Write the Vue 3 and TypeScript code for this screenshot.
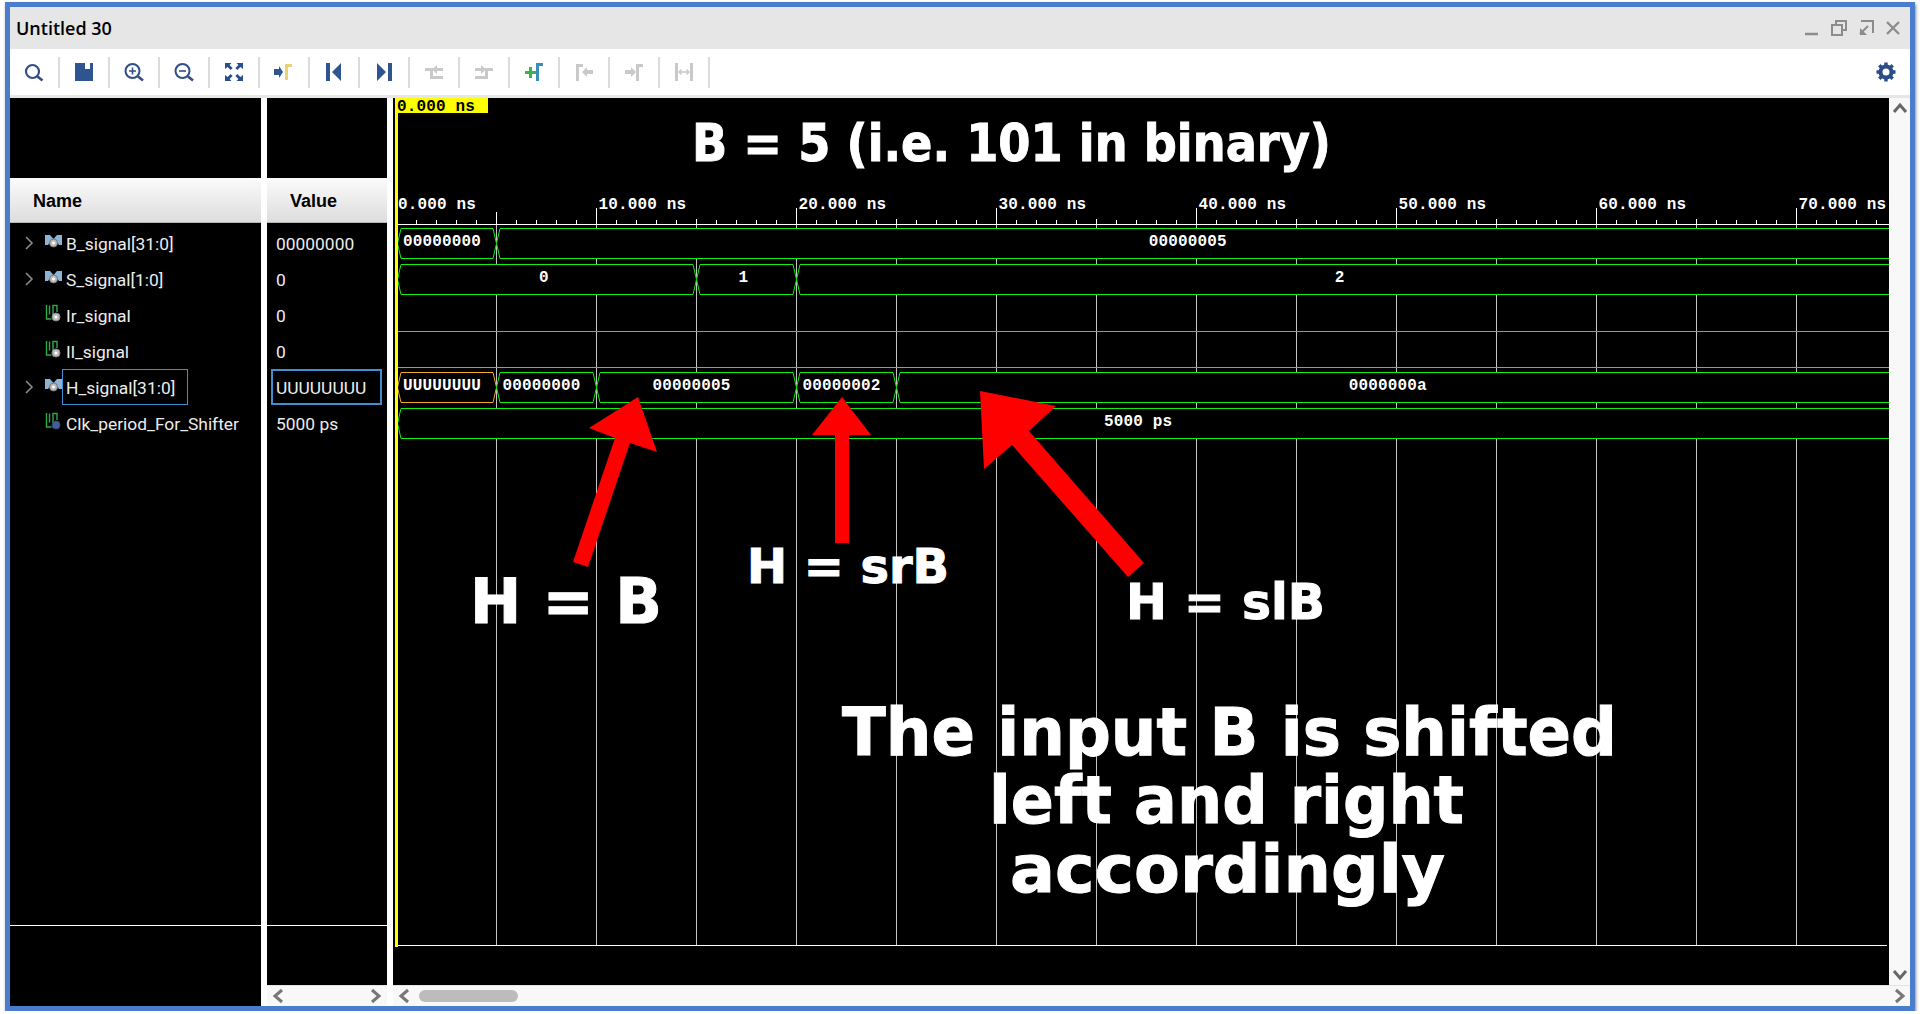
<script setup lang="ts">
// waveform viewer: the svg canvas uses page coordinates through its viewBox
interface Seg { from: number; to: number; label: string; color?: string }
interface Bus { top: number; base: number; segs: Seg[] }

const NS0 = 396.5
const PX_PER_NS = 20
const RIGHT = 1900 // past the edge of the canvas, gets clipped
const xOf = (ns: number) => NS0 + ns * PX_PER_NS

const signals = [
  { name: 'B_signal[31:0]', value: '00000000', bus: true },
  { name: 'S_signal[1:0]', value: '0', bus: true },
  { name: 'Ir_signal', value: '0', bus: false },
  { name: 'Il_signal', value: '0', bus: false },
  { name: 'H_signal[31:0]', value: 'UUUUUUUU', bus: true, selected: true },
  { name: 'Clk_period_For_Shifter', value: '5000 ps', bus: false, clock: true },
]

const buses: Bus[] = [
  { top: 228.5, base: 246, segs: [
    { from: 397.5, to: xOf(5), label: '00000000' },
    { from: xOf(5), to: RIGHT, label: '00000005' },
  ] },
  { top: 264.5, base: 282, segs: [
    { from: 397.5, to: xOf(15), label: '0' },
    { from: xOf(15), to: xOf(20), label: '1' },
    { from: xOf(20), to: RIGHT, label: '2' },
  ] },
  { top: 372.5, base: 390, segs: [
    { from: 397.5, to: xOf(5), label: 'UUUUUUUU', color: '#f5a623' },
    { from: xOf(5), to: xOf(10), label: '00000000' },
    { from: xOf(10), to: xOf(20), label: '00000005' },
    { from: xOf(20), to: xOf(25), label: '00000002' },
    { from: xOf(25), to: RIGHT, label: '0000000a' },
  ] },
  { top: 408.5, base: 426, segs: [
    { from: 397.5, to: RIGHT, label: '5000 ps' },
  ] },
]

const flatLines = [331.5, 367.5]

const grid = Array.from({ length: 15 }, (_, i) => xOf((i + 1) * 5))
const labels = Array.from({ length: 8 }, (_, i) => i * 10)
const minorTicks = Array.from({ length: 75 }, (_, i) => xOf(i + 1))

function hexPoints(s: Seg, top: number) {
  const bot = top + 30
  const mid = top + 15
  return `${s.from},${mid} ${s.from + 3.5},${top} ${s.to - 3.5},${top} ${s.to},${mid} ${s.to - 3.5},${bot} ${s.from + 3.5},${bot}`
}

function labelX(s: Seg) {
  const to = Math.min(s.to, 1889)
  return (s.from + to) / 2 - (s.label.length > 1 ? 5 : 3)
}

const notes = [
  { text: 'B = 5 (i.e. 101 in binary)', x: 692, y: 161, len: 639, size: 52 },
  { text: 'H = B', x: 470, y: 623, len: 192, size: 63 },
  { text: 'H = srB', x: 747, y: 583, len: 202, size: 48 },
  { text: 'H = slB', x: 1126, y: 619, len: 199, size: 49 },
  { text: 'The input B is shifted', x: 842, y: 755, len: 775, size: 66 },
  { text: 'left and right', x: 989, y: 823, len: 475, size: 66 },
  { text: 'accordingly', x: 1010, y: 892, len: 435, size: 66 },
]

const arrows = [
  '638,397 589,428 615,438 573,562 588,567 630,443 657,452',
  '842,397 812,435 835,435 835,543 849,543 849,435 871,435',
  '980,391 1056,406 1029,431 1144,563 1128,577 1012,445 984,469',
]
</script>

<template>
  <div class="window">
    <header class="titlebar">
      <span class="title">Untitled 30</span>
      <div class="win-btns">
        <svg width="18" height="18" viewBox="0 0 18 18"><path d="M2 15h13" stroke="#8c8c8c" stroke-width="2.5" /></svg>
        <svg width="18" height="18" viewBox="0 0 18 18" fill="none" stroke="#8c8c8c" stroke-width="2"><path d="M6 5V2h10v9h-3" /><rect x="2" y="6" width="10" height="10" /></svg>
        <svg width="18" height="18" viewBox="0 0 18 18" fill="none" stroke="#8c8c8c" stroke-width="2"><path d="M4 2h12v12" /><path d="M3 15l8-8" /><path d="M3 9v7h7" fill="#8c8c8c" stroke="none" /></svg>
        <svg width="18" height="18" viewBox="0 0 18 18" fill="none" stroke="#8c8c8c" stroke-width="2.4"><path d="M3 3l12 12M15 3L3 15" /></svg>
      </div>
    </header>

    <nav class="toolbar">
      <div class="tool">
        <svg viewBox="0 0 24 24" fill="none" stroke="#2f4f86"><circle cx="10.5" cy="11.5" r="6.5" stroke-width="2.2" /><path d="M15.5 16.5l5 4" stroke-width="2.6" /></svg>
      </div>
      <div class="tool">
        <svg viewBox="0 0 24 24"><path d="M3 3h18v18H3z" fill="#2f5590" /><path d="M13 3h5v6h-5z" fill="#fff" /></svg>
      </div>
      <div class="tool">
        <svg viewBox="0 0 24 24" fill="none" stroke="#2f4f86"><circle cx="10.5" cy="11" r="7" stroke-width="2" /><path d="M10.5 7.5v7M7 11h7" stroke-width="1.6" /><path d="M16 16.5l5 4" stroke-width="2.6" /></svg>
      </div>
      <div class="tool">
        <svg viewBox="0 0 24 24" fill="none" stroke="#2f4f86"><circle cx="10.5" cy="11" r="7" stroke-width="2" /><path d="M7 11h7" stroke-width="1.6" /><path d="M16 16.5l5 4" stroke-width="2.6" /></svg>
      </div>
      <div class="tool">
        <svg viewBox="0 0 24 24" fill="#2a4f8c"><path d="M3 3h6.5L7.6 5l3 3-2 2-3-3L3 9zM21 3v6l-2.600-2-3 3-2-2 3-3L14.500 3zM3 21v-6l2.600 2 3-3 2 2-3 3L9.500 21zM21 21h-6.500l1.900-2-3-3 2-2 3 3 2.600-2z" /></svg>
      </div>
      <div class="tool">
        <svg viewBox="0 0 24 24"><path d="M2 9h5V6l4 6-4 6v-3H2z" fill="#2f5590" /><path d="M13 4h7v3h-4v13h-3z" fill="#e9d26f" /></svg>
      </div>
      <div class="tool">
        <svg viewBox="0 0 24 24" fill="#2f5590"><path d="M4 3h4v18H4zM19 3v18L10 12z" /></svg>
      </div>
      <div class="tool">
        <svg viewBox="0 0 24 24" fill="#2f5590"><path d="M5 3v18l9-9zM16 3h4v18h-4z" /></svg>
      </div>
      <div class="tool">
        <svg viewBox="0 0 24 24" fill="#c9c9c9"><path d="M3 11h5v8h13v-3H11V8H3z" /><path d="M21 8h-6V5l-5 4.500 5 4.500v-3h6z" /></svg>
      </div>
      <div class="tool">
        <svg viewBox="0 0 24 24" fill="#c9c9c9"><path d="M3 8h6v-3l5 4.500-5 4.500v-3H3z" /><path d="M3 16h10V8h8v3h-5v8H3z" /></svg>
      </div>
      <div class="tool">
        <svg viewBox="0 0 24 24"><path d="M3 11h4V7h3v4h4v3h-4v4H7v-4H3z" fill="#3bb34a" /><path d="M14 3h7v3h-4v15h-3z" fill="#3a8db5" /></svg>
      </div>
      <div class="tool">
        <svg viewBox="0 0 24 24" fill="#c9c9c9"><path d="M4 4h7v3H7v14H4z" /><path d="M21 10h-6V7l-5 5 5 5v-3h6z" /></svg>
      </div>
      <div class="tool">
        <svg viewBox="0 0 24 24" fill="#c9c9c9"><path d="M3 10h6V7l5 5-5 5v-3H3z" /><path d="M14 4h7v3h-4v14h-3z" /></svg>
      </div>
      <div class="tool">
        <svg viewBox="0 0 24 24" fill="none" stroke="#c9c9c9"><path d="M4.500 3v18M19.500 3v18" stroke-width="3" /><path d="M7 12h10M9.500 9.500L7 12l2.500 2.500M14.500 9.500L17 12l-2.500 2.500" stroke-width="1.400" /></svg>
      </div>
      <div class="gear">
        <svg width="22" height="22" viewBox="0 0 22 22" fill="none" stroke="#2a4c88">
          <circle cx="11" cy="11" r="5.500" stroke-width="4" />
          <g stroke-width="3.400">
            <path d="M11 1.500v3M11 17.500v3M1.500 11h3M17.500 11h3M4.300 4.300l2.100 2.100M15.600 15.600l2.100 2.100M17.700 4.300l-2.100 2.100M6.400 15.600l-2.100 2.100" />
          </g>
        </svg>
      </div>
    </nav>

    <main class="panes">
      <section class="names">
        <div class="top-gap"></div>
        <div class="col-head name-head">Name</div>
        <div class="rows">
          <div v-for="s in signals" :key="s.name" class="row">
            <svg v-if="s.bus" class="chev" width="10" height="16" viewBox="0 0 10 16" fill="none" stroke="#8a8a8a" stroke-width="1.600"><path d="M2 2l6 6-6 6" /></svg>
            <span v-else class="chev-space"></span>
            <svg v-if="s.bus" class="sig-icon" width="17" height="16" viewBox="0 0 17 16">
              <path d="M0 1h5l3.500 4L12 1h5v10h-3l-2-3H5l-2 3H0z" fill="#8db4d4" />
              <circle cx="8.500" cy="9" r="4" fill="#bbb" stroke="#777" />
              <circle cx="8.500" cy="9" r="1.500" fill="#fff" />
            </svg>
            <svg v-else class="sig-icon scalar" width="17" height="18" viewBox="0 0 17 18" fill="none">
              <path d="M1.500 1v14h5" stroke="#2fa84a" stroke-width="1.400" />
              <path d="M4.500 1.500v9M8 11V1.500h4V8" stroke="#2fa84a" stroke-width="1.400" />
              <circle cx="11" cy="13" r="4" :fill="s.clock ? '#3f5f95' : '#bbb'" :stroke="s.clock ? '#2f4a78' : '#888'" />
              <circle v-if="!s.clock" cx="11" cy="13" r="1.500" fill="#fff" />
            </svg>
            <span class="sig-name" :class="{ selected: s.selected }">{{ s.name }}</span>
          </div>
        </div>
        <div class="names-foot"></div>
      </section>

      <section class="values">
        <div class="top-gap"></div>
        <div class="col-head value-head">Value</div>
        <div class="rows">
          <div v-for="s in signals" :key="s.name" class="row">
            <span class="sig-value" :class="{ selected: s.selected }">{{ s.value }}</span>
          </div>
        </div>
        <div class="values-foot"></div>
        <div class="hscroll">
          <svg width="12" height="16" viewBox="0 0 12 16" fill="none" stroke="#777" stroke-width="3"><path d="M10 2L3 8l7 6" /></svg>
          <svg width="12" height="16" viewBox="0 0 12 16" fill="none" stroke="#777" stroke-width="3"><path d="M2 2l7 6-7 6" /></svg>
        </div>
      </section>

      <section class="wave-col">
        <div class="wave-main">
          <svg class="canvas" width="1496" height="887" viewBox="393 98 1496 887">
            <!-- grid -->
            <line v-for="x in grid" :key="x" class="gridline" :x1="x" :x2="x" y1="224" y2="945" />
            <line class="ruler" x1="398" x2="1889" y1="224.500" y2="224.500" />
            <line class="ruler" x1="398" x2="1887" y1="945.500" y2="945.500" />

            <!-- ruler -->
            <line v-for="x in minorTicks" :key="x" class="ruler" :x1="x" :x2="x" y1="220" y2="224" />
            <line class="ruler" x1="496.500" x2="496.500" y1="212" y2="224" />
            <line v-for="x in grid" :key="'t' + x" class="ruler" :x1="x" :x2="x" y1="219" y2="224" />
            <template v-for="n in labels" :key="n">
              <line v-if="n" class="ruler" :x1="xOf(n)" :x2="xOf(n)" y1="208" y2="224" />
              <text class="mono" :x="xOf(n) + (n ? 2 : 1.500)" y="209">{{ n }}.000 ns</text>
            </template>

            <!-- signals -->
            <line v-for="y in flatLines" :key="y" class="flat" x1="398" x2="1889" :y1="y" :y2="y" />
            <template v-for="b in buses" :key="b.top">
              <template v-for="s in b.segs" :key="s.from">
                <polygon class="bus" :points="hexPoints(s, b.top)" :style="s.color ? { stroke: s.color } : undefined" />
                <text class="mono" text-anchor="middle" :x="labelX(s)" :y="b.base">{{ s.label }}</text>
              </template>
            </template>

            <!-- cursor -->
            <rect x="395" y="98" width="3" height="849" fill="#ffff00" />
            <rect x="396" y="98" width="92" height="15" fill="#ffff00" />
            <text class="mono cursor-label" x="397" y="111">0.000 ns</text>

            <!-- hand drawn notes on top of the capture -->
            <polygon v-for="a in arrows" :key="a" :points="a" fill="#ff0000" />
            <text
              v-for="n in notes"
              :key="n.text"
              class="note"
              :x="n.x"
              :y="n.y"
              :font-size="n.size"
              :textLength="n.len"
              lengthAdjust="spacingAndGlyphs"
            >{{ n.text }}</text>
          </svg>
          <div class="vscroll">
            <svg width="16" height="12" viewBox="0 0 16 12" fill="none" stroke="#666" stroke-width="3"><path d="M2 10l6-7 6 7" /></svg>
            <svg width="16" height="12" viewBox="0 0 16 12" fill="none" stroke="#666" stroke-width="3"><path d="M2 2l6 7 6-7" /></svg>
          </div>
        </div>
        <div class="hscroll wave-scroll">
          <svg width="12" height="16" viewBox="0 0 12 16" fill="none" stroke="#777" stroke-width="3"><path d="M10 2L3 8l7 6" /></svg>
          <div class="thumb"></div>
          <svg class="to-right" width="12" height="16" viewBox="0 0 12 16" fill="none" stroke="#777" stroke-width="3"><path d="M2 2l7 6-7 6" /></svg>
        </div>
      </section>
    </main>
  </div>
</template>

<style scoped>
.window {
  box-sizing: border-box;
  width: 1910px;
  height: 1009px;
  margin: 2px 0 0 5px;
  border: 5px solid #4a7dcc;
  display: flex;
  flex-direction: column;
  background: #fff;
  box-shadow: 1px 2px 3px #888;
}

.titlebar {
  height: 42px;
  flex: none;
  background: #e6e6e6;
  display: flex;
  align-items: center;
  justify-content: space-between;
  padding: 0 8px 0 6px;
}
.title {
  font: 600 18px "Open Sans", sans-serif;
  color: #000;
}
.win-btns { display: flex; gap: 9px; }
.win-btns svg { display: block; }

.toolbar {
  height: 46px;
  flex: none;
  box-sizing: content-box;
  border-bottom: 3px solid #e6e6e6;
  display: flex;
  align-items: center;
}
.tool {
  box-sizing: border-box;
  width: 50px;
  height: 31px;
  border-right: 2px solid #dcdcdc;
  display: flex;
  align-items: center;
  justify-content: center;
}
.tool svg { width: 24px; height: 24px; display: block; }
.gear { margin-left: auto; padding-right: 13px; height: 22px; }

.panes {
  flex: 1;
  min-height: 0;
  display: flex;
}
.names, .values {
  background: #000;
  display: flex;
  flex-direction: column;
  margin-right: 6px;
  flex: none;
}
.names { width: 251px; }
.values { width: 120px; }
.top-gap { height: 80px; flex: none; }
.col-head {
  box-sizing: border-box;
  height: 45px;
  flex: none;
  padding-top: 3px;
  background: linear-gradient(#fbfbfb, #dddddd);
  border-bottom: 1px solid #b5b5b5;
  font: bold 18px "Liberation Sans", sans-serif;
  color: #000;
  display: flex;
  align-items: center;
}
.name-head { padding-left: 23px; }
.value-head { padding-left: 23px; }

.rows {
  flex: 1;
  padding-top: 2px;
  font: 17.400px Roboto, sans-serif;
  color: #ededed;
}
.row {
  height: 36px;
  display: flex;
  align-items: center;
}
.chev { margin-left: 14px; flex: none; }
.chev-space { width: 24px; flex: none; }
.sig-icon { margin-left: 11px; margin-top: -3px; flex: none; }
.sig-icon.scalar { margin-top: -4px; }
.sig-name {
  box-sizing: border-box;
  height: 36px;
  padding: 1px 12px 0 3px;
  border: 1px solid transparent;
  display: flex;
  align-items: center;
}
.sig-name.selected { border-color: #3d8fd1; }
.sig-value {
  box-sizing: border-box;
  width: 111px;
  height: 36px;
  margin-left: 4px;
  padding: 1px 0 0 3px;
  border: 2px solid transparent;
  display: flex;
  align-items: center;
}
.sig-value.selected { border-color: #3d8fd1; }

.names-foot {
  height: 80px;
  flex: none;
  border-top: 1px solid #fff;
}
.values-foot {
  height: 59px;
  flex: none;
  border-top: 1px solid #fff;
}

.hscroll {
  height: 21px;
  flex: none;
  background: #f8f8f8;
  border-top: 1px solid #e4e4e4;
  box-sizing: border-box;
  display: flex;
  align-items: center;
  justify-content: space-between;
  padding: 0 5px;
}
.wave-col {
  flex: 1;
  min-width: 0;
  display: flex;
  flex-direction: column;
}
.wave-main {
  flex: 1;
  min-height: 0;
  display: flex;
}
.canvas {
  display: block;
  background: #000;
  flex: none;
}
.vscroll {
  flex: 1;
  background: #f8f8f8;
  display: flex;
  flex-direction: column;
  align-items: center;
  justify-content: space-between;
  padding: 4px 0 4px;
}
.wave-scroll {
  justify-content: flex-start;
  padding-left: 5px;
}
.thumb {
  width: 99px;
  height: 12px;
  margin-left: 9px;
  border-radius: 6px;
  background: #bcbcbc;
}
.to-right { margin-left: auto; margin-right: -1px; }

.gridline { stroke: #c4c4c4; stroke-width: 1; }
.ruler { stroke: #fff; stroke-width: 1; }
.flat { stroke: #00ff00; stroke-width: 1; }
.bus { fill: #000; stroke: #10f010; stroke-width: 1; }
.mono {
  font-family: "Liberation Mono", monospace;
  font-size: 16px;
  font-weight: 700;
  letter-spacing: 0.15px;
  fill: #fff;
}
.cursor-label { fill: #000; }
.note {
  font-family: "DejaVu Sans", sans-serif;
  font-weight: 700;
  fill: #fff;
  stroke: #fff;
  stroke-width: 1px;
}
</style>

<style>
html, body { background: #fff; overflow: hidden; }
</style>
